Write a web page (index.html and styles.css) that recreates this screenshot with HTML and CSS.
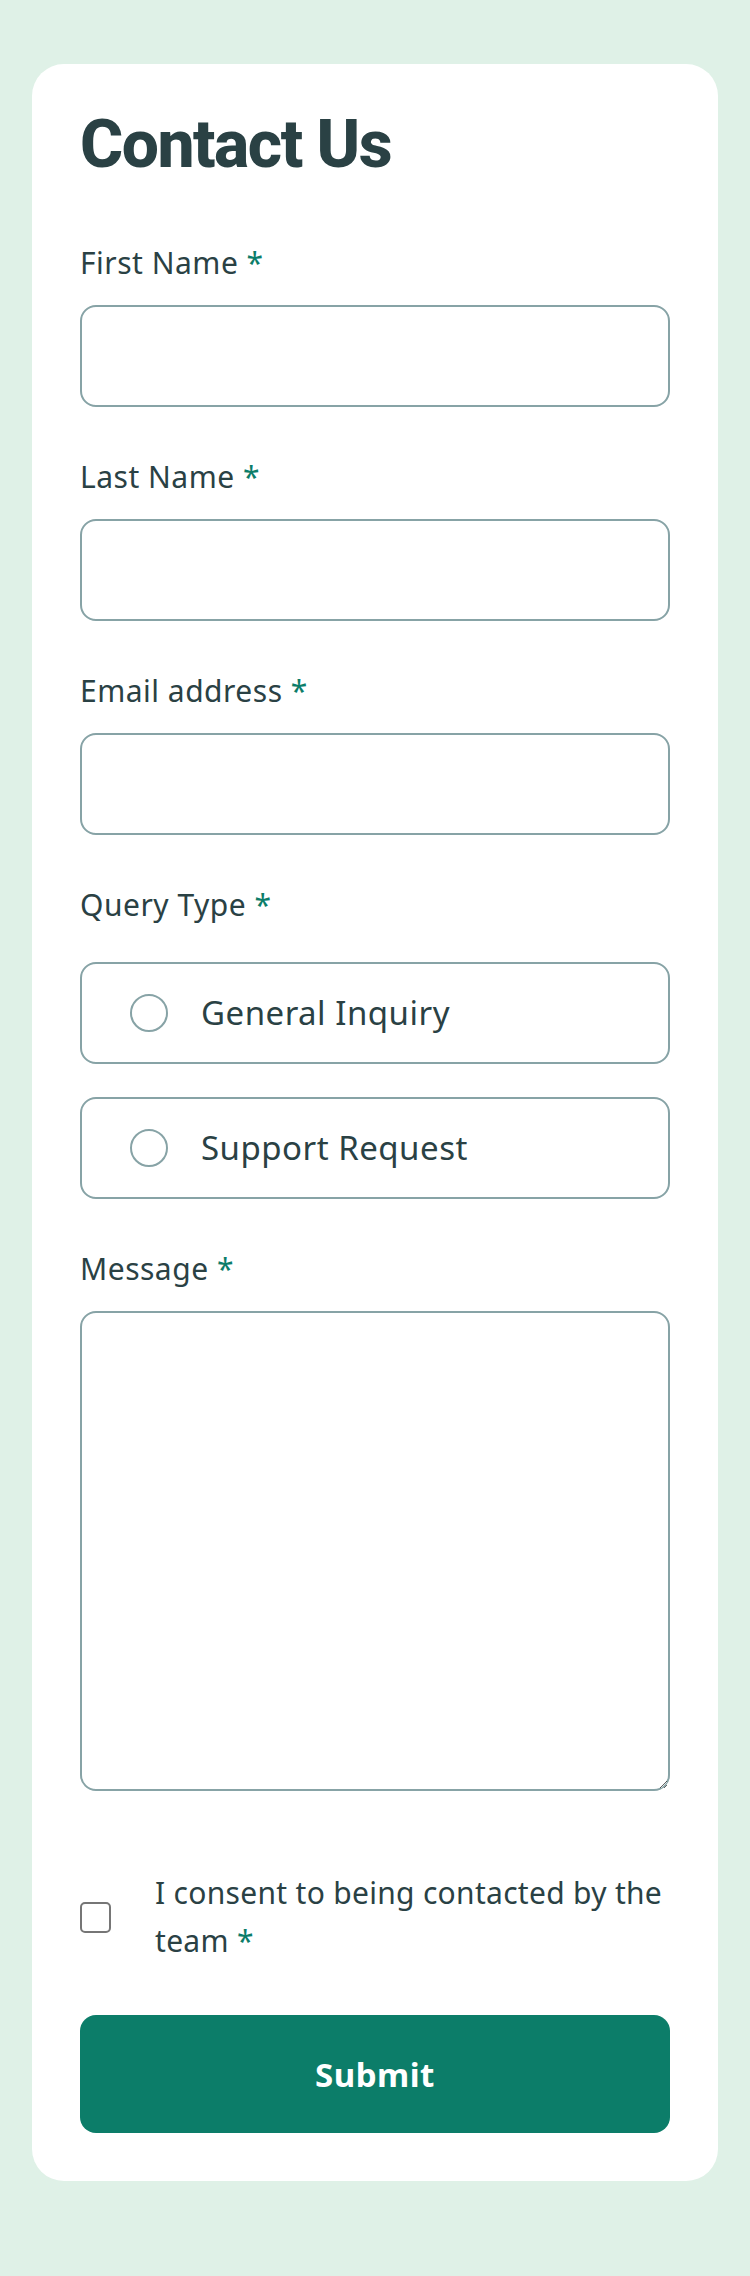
FILE: index.html
```html
<!DOCTYPE html>
<html lang="en">
<head>
<meta charset="utf-8">
<title>Contact Us</title>
<link rel="stylesheet" href="styles.css">
</head>
<body>
<main class="card">
  <h1 class="title">Contact Us</h1>
  <form class="form">
    <div class="field">
      <label class="label">First Name <span class="req">*</span></label>
      <div class="input"></div>
    </div>
    <div class="field">
      <label class="label">Last Name <span class="req">*</span></label>
      <div class="input"></div>
    </div>
    <div class="field">
      <label class="label">Email address <span class="req">*</span></label>
      <div class="input"></div>
    </div>
    <div class="field">
      <span class="label">Query Type <span class="req">*</span></span>
      <div class="radios">
        <div class="radio"><span class="circle"></span><span class="radio-text">General Inquiry</span></div>
        <div class="radio"><span class="circle"></span><span class="radio-text">Support Request</span></div>
      </div>
    </div>
    <div class="field">
      <label class="label">Message <span class="req">*</span></label>
      <textarea class="textarea"></textarea>
    </div>
    <div class="consent">
      <span class="checkbox"></span>
      <span class="consent-text">I consent to being contacted by the team <span class="req">*</span></span>
    </div>
    <div class="submit">Submit</div>
  </form>
</main>
</body>
</html>
```
FILE: styles.css
```css
html, body {
  margin: 0;
  padding: 0;
}
body {
  background: #dff1e7;
  padding: 64px 32px 96px;
  font-family: "Noto Sans", "Liberation Sans", sans-serif;
  color: #2a4144;
}
.card {
  background: #ffffff;
  border-radius: 32px;
  padding: 48px 48px 48px;
}
.title {
  margin: 0 0 67px;
  font-family: Roboto, "Noto Sans", sans-serif;
  font-weight: 800;
  font-size: 66px;
  line-height: 66px;
  letter-spacing: -1.5px;
  color: #2a4144;
}
.form {
  display: flex;
  flex-direction: column;
}
.field {
  display: flex;
  flex-direction: column;
  margin-bottom: 52px;
}
.label {
  font-size: 30px;
  line-height: 36px;
  letter-spacing: 0.5px;
  margin-bottom: 24px;
}
.req {
  color: #0c7d69;
}
.input {
  height: 98px;
  border: 2px solid #87a3a6;
  border-radius: 16px;
  box-sizing: content-box;
}
.radios {
  display: flex;
  flex-direction: column;
  gap: 33px;
  margin-top: 15px;
}
.radio {
  height: 98px;
  border: 2px solid #87a3a6;
  border-radius: 16px;
  display: flex;
  align-items: center;
  padding-left: 48px;
}
.circle {
  width: 34px;
  height: 34px;
  border: 2px solid #87a3a6;
  border-radius: 50%;
  flex: none;
}
.radio-text {
  margin-left: 33px;
  font-size: 33px;
  letter-spacing: 0.5px;
  line-height: 40px;
}
.textarea {
  display: block;
  box-sizing: border-box;
  width: 100%;
  height: 480px;
  margin: 0;
  border: 2px solid #87a3a6;
  border-radius: 16px;
  background: #fff;
  font: inherit;
}
.consent {
  display: flex;
  align-items: center;
  gap: 44px;
  margin-top: 26px;
}
.checkbox {
  flex: none;
  width: 27px;
  height: 27px;
  border: 2px solid #767676;
  border-radius: 5px;
}
.consent-text {
  font-size: 30px;
  line-height: 48px;
  letter-spacing: 0.3px;
}
.submit {
  margin-top: 50px;
  height: 118px;
  border-radius: 16px;
  background: #0c7d69;
  color: #ffffff;
  display: flex;
  align-items: center;
  justify-content: center;
  font-size: 33px;
  font-weight: 700;
  letter-spacing: 0.5px;
}
```
